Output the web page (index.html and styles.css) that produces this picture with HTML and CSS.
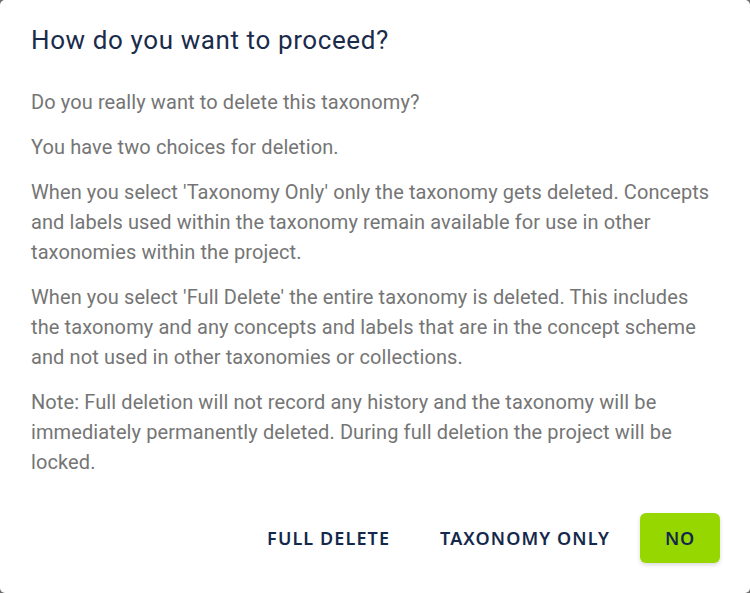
FILE: index.html
```html
<!DOCTYPE html>
<html lang="en">
<head>
    <meta charset="UTF-8">
    <title>How do you want to proceed?</title>
    <link rel="stylesheet" href="styles.css">
</head>
<body>
    <div class="dialog">
        <h2 class="dialog-title">How do you want to proceed?</h2>
        <div class="dialog-content">
            <p>Do you really want to delete this taxonomy?</p>
            <p>You have two choices for deletion.</p>
            <p>When you select 'Taxonomy Only' only the taxonomy gets deleted. Concepts and labels used within the taxonomy remain available for use in other taxonomies within the project.</p>
            <p>When you select 'Full Delete' the entire taxonomy is deleted. This includes the taxonomy and any concepts and labels that are in the concept scheme and not used in other taxonomies or collections.</p>
            <p>Note: Full deletion will not record any history and the taxonomy will be immediately permanently deleted. During full deletion the project will be locked.</p>
        </div>
        <div class="dialog-actions">
            <button class="btn">Full Delete</button>
            <button class="btn">Taxonomy Only</button>
            <button class="btn btn-primary">No</button>
        </div>
    </div>
</body>
</html>
```

FILE: styles.css
```css
html, body {
    margin: 0;
    padding: 0;
    height: 100%;
    background: #6b6b6b;
}
.dialog {
    box-sizing: border-box;
    height: 593px;
    background: #ffffff;
    border-radius: 5px;
    padding: 22px 30px 0 31px;
}
.dialog-title {
    margin: 0;
    font-family: Roboto, "Noto Sans", sans-serif;
    font-size: 26px;
    font-weight: 400;
    letter-spacing: 0.6px;
    color: #1b2b4b;
    line-height: 36px;
}
.dialog-content {
    margin-top: 29px;
    font-family: Roboto, sans-serif;
    font-size: 20px;
    letter-spacing: 0.1px;
    line-height: 30px;
    color: #757575;
}
.dialog-content p {
    margin: 0 0 15px 0;
}
.dialog-actions {
    display: flex;
    justify-content: flex-end;
    align-items: center;
    gap: 10px;
    margin-top: 36px;
}
.btn {
    font-family: "Noto Sans", sans-serif;
    font-size: 18px;
    font-weight: 600;
    letter-spacing: 1.1px;
    text-transform: uppercase;
    color: #14284b;
    background: transparent;
    border: none;
    border-radius: 6px;
    padding: 0 20px;
    height: 50px;
    cursor: pointer;
}
.btn-primary {
    background: #97d700;
    min-width: 80px;
    padding: 0 16px;
    letter-spacing: 0.9px;
    box-shadow: 0 2px 4px rgba(0, 0, 0, 0.15);
}
```
